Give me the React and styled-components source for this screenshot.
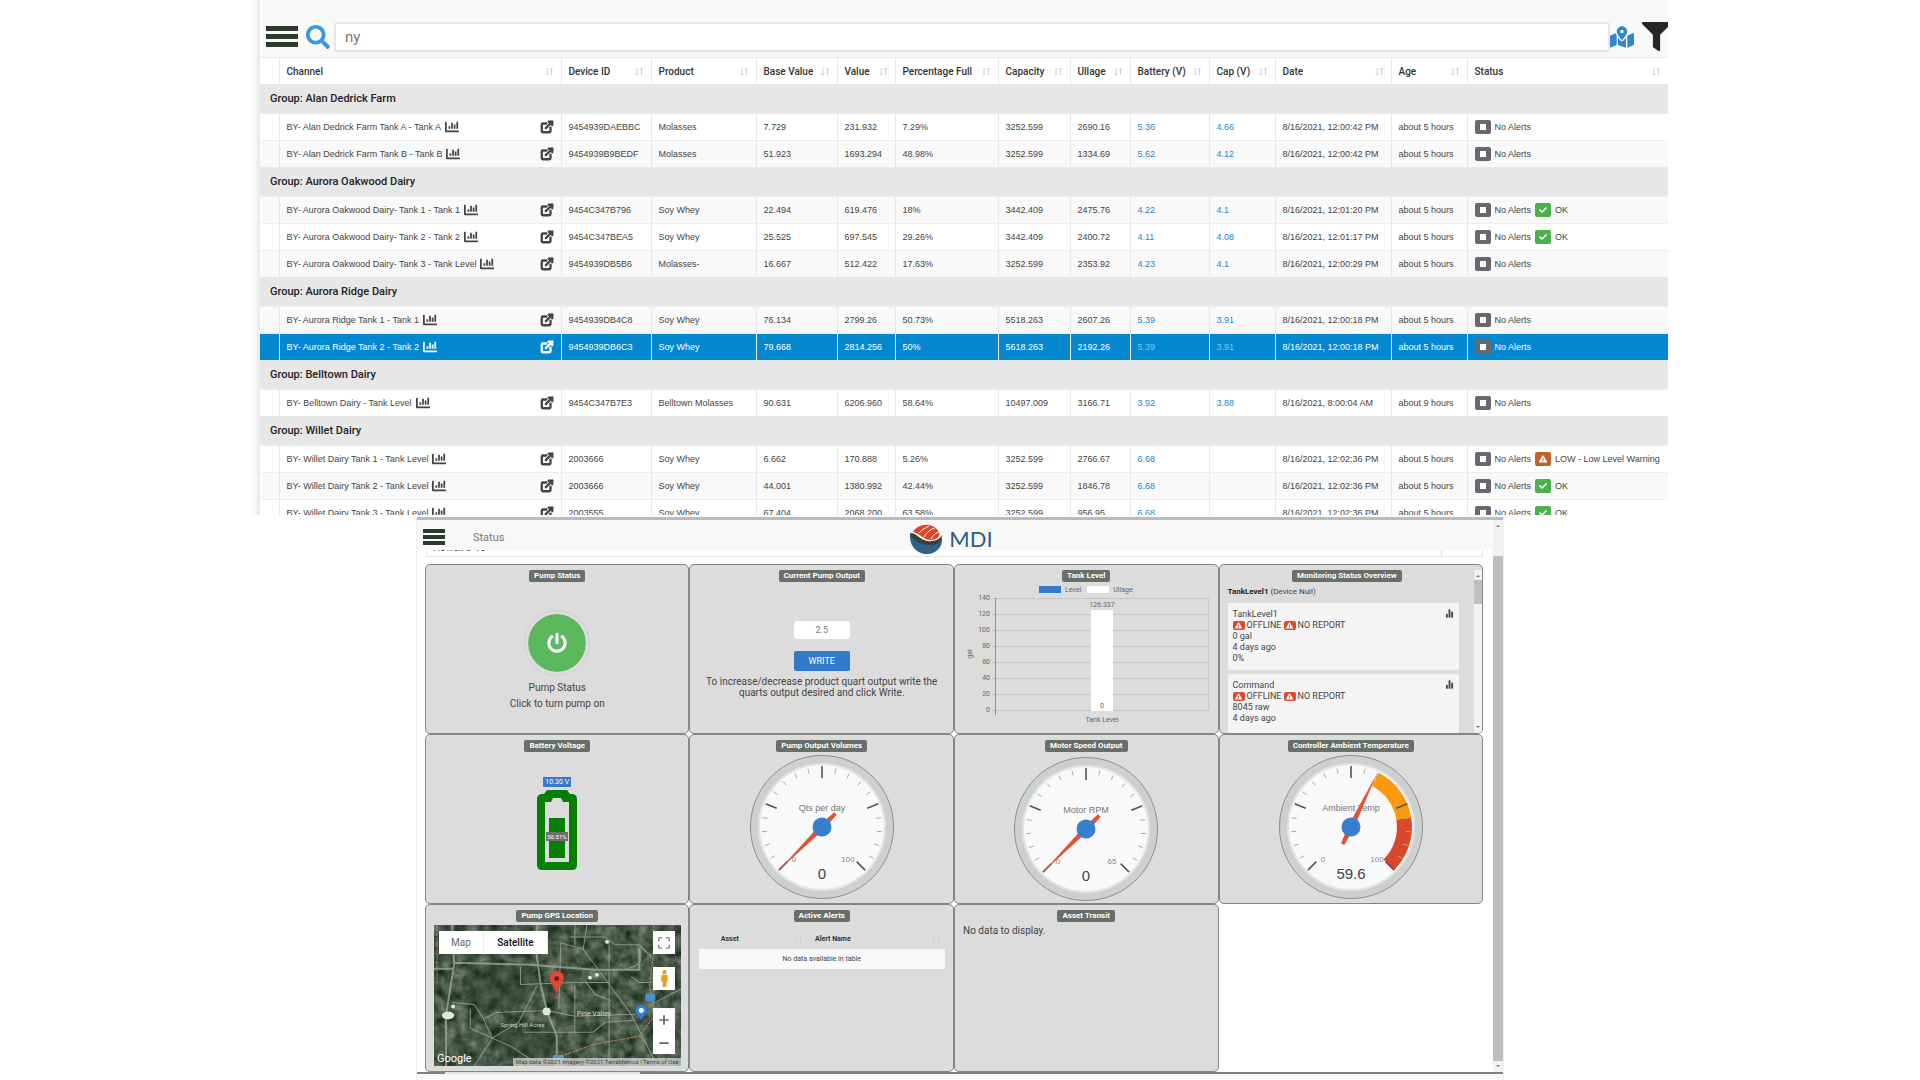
import styled, { createGlobalStyle, css } from 'styled-components'
import { FaFilter, FaSearch, FaMapMarkedAlt, FaPowerOff, FaChartBar, FaCheck, FaExclamationTriangle, FaMale } from 'react-icons/fa'
import { ExternalLink, ChartNoAxesColumn, Maximize, Plus, Minus } from 'lucide-react'

const GlobalStyle = createGlobalStyle`
    * { box-sizing: border-box; }
    body {
        margin: 0;
        background: #fff;
        color: #444;
        font-family: Roboto, "Liberation Sans", sans-serif;
    }
    button, input { font-family: inherit; }
    a { color: inherit; text-decoration: none; }
`

const Page = styled.main`
    min-height: 100vh;
    display: flex;
    flex-direction: column;
    align-items: center;
`

/* ---------- tank list ---------- */

const ListPanel = styled.section`
    width: 73.75%;
    max-height: 515px;
    overflow: hidden;
    padding-left: 5px;
    background: #f8f8f8;
`

const ListInner = styled.div`
    border-left: 3px solid #ececec;
`

const Toolbar = styled.div`
    display: flex;
    align-items: center;
    height: 58px;
    padding: 16px 0 0 6px;
    border-bottom: 1px solid #e8e8e8;
`

const IconButton = styled.button`
    display: flex;
    flex: none;
    padding: 0;
    border: 0;
    background: none;
    color: ${({$color}) => $color};
    margin-right: ${({$gap}) => $gap || 0}px;
`

const Bars = styled.span`
    display: flex;
    flex-direction: column;
    justify-content: space-between;
    width: ${({$w}) => $w}px;
    height: ${({$h}) => $h}px;

    i {
        height: ${({$bar}) => $bar}px;
        background: #2c382c;
    }
`

const SearchInput = styled.input`
    flex: 1;
    min-width: 0;
    height: 30px;
    padding: 0 9px;
    border: 2px solid #e6e6e6;
    border-radius: 3px;
    background: #fff;
    color: #777;
    font-size: 15px;
`

const FilterClip = styled.span`
    width: 26px;
    overflow: hidden;
    display: flex;

    svg { flex: none; }
`

const TankTable = styled.table`
    width: 100%;
    table-layout: fixed;
    border-collapse: collapse;
    font-family: "Liberation Sans", Arial, sans-serif;
    font-size: 9px;
    white-space: nowrap;
`

const cell = css`
    padding: 0 7px;
    overflow: hidden;
    text-align: left;
    border-left: 1px solid #e8e8e8;

    &:first-child { border-left: 0; }
`

const HeadCell = styled.th`
    ${cell}
    height: 26px;
    background: #fff;
    color: #333;
    font-family: Roboto, sans-serif;
    font-size: 10px;
    font-weight: 500;
`

const Between = styled.div`
    display: flex;
    align-items: center;
    justify-content: space-between;
`

const GroupCell = styled.td`
    height: 29px;
    padding: 0 10px;
    background: #e7e7e7;
    color: #222;
    font-family: Roboto, sans-serif;
    font-size: 11px;
    font-weight: 500;
`

const Row = styled.tr`
    background: ${({$selected, $shade}) => $selected ? '#0388d0' : $shade ? '#f9f9f9' : '#fff'};
    color: ${({$selected}) => $selected ? '#fff' : '#444'};
    border-top: 1px solid #eee;
`

const Cell = styled.td`
    ${cell}
    height: 27px;
`

const ValueLink = styled.a`
    color: ${({$selected}) => $selected ? '#7cc6f0' : '#1d86c8'};
`

const Label = styled.span`
    display: flex;
    align-items: center;
    gap: 4px;
`

const badgeColors = { none: '#6a6670', ok: '#4cb04f', low: '#c1622d', offline: '#dd4b2b' }

const StatusBadge = styled.span`
    display: inline-flex;
    align-items: center;
    justify-content: center;
    width: ${({$small}) => $small ? 12 : 16}px;
    height: ${({$small}) => $small ? 9 : 14}px;
    border-radius: 2px;
    background: ${({$kind}) => badgeColors[$kind]};
    color: #fff;

    b {
        width: 6px;
        height: 6px;
        background: #fff;
    }
`

function SortIcon(){
    return(
        <svg width="9" height="9" viewBox="0 0 9 9" fill="none" stroke="#cfcfcf">
            <path d="M2 1v7M.5 6.5 2 8l1.500-1.500M6.500 8V1M5 2.500 6.500 1 8 2.500" />
        </svg>
    )
}

const columns = [
    { name: '', width: 19 },
    { name: 'Channel' },
    { name: 'Device ID', width: 90 },
    { name: 'Product', width: 105 },
    { name: 'Base Value', width: 81 },
    { name: 'Value', width: 58 },
    { name: 'Percentage Full', width: 103 },
    { name: 'Capacity', width: 72 },
    { name: 'Ullage', width: 60 },
    { name: 'Battery (V)', width: 79 },
    { name: 'Cap (V)', width: 66 },
    { name: 'Date', width: 116 },
    { name: 'Age', width: 76 },
    { name: 'Status', width: 201 },
]

const groups = [
    { name: 'Alan Dedrick Farm', rows: [
        ['BY- Alan Dedrick Farm Tank A - Tank A', '9454939DAEBBC', 'Molasses', '7.729', '231.932', '7.29%', '3252.599', '2690.16', '5.36', '4.66', '8/16/2021, 12:00:42 PM', 'about 5 hours'],
        ['BY- Alan Dedrick Farm Tank B - Tank B', '9454939B9BEDF', 'Molasses', '51.923', '1693.294', '48.98%', '3252.599', '1334.69', '5.62', '4.12', '8/16/2021, 12:00:42 PM', 'about 5 hours', '', true],
    ]},
    { name: 'Aurora Oakwood Dairy', rows: [
        ['BY- Aurora Oakwood Dairy- Tank 1 - Tank 1', '9454C347B796', 'Soy Whey', '22.494', '619.476', '18%', '3442.409', '2475.76', '4.22', '4.1', '8/16/2021, 12:01:20 PM', 'about 5 hours', 'ok', true],
        ['BY- Aurora Oakwood Dairy- Tank 2 - Tank 2', '9454C347BEA5', 'Soy Whey', '25.525', '697.545', '29.26%', '3442.409', '2400.72', '4.11', '4.08', '8/16/2021, 12:01:17 PM', 'about 5 hours', 'ok'],
        ['BY- Aurora Oakwood Dairy- Tank 3 - Tank Level', '9454939DB5B6', 'Molasses-', '16.667', '512.422', '17.63%', '3252.599', '2353.92', '4.23', '4.1', '8/16/2021, 12:00:29 PM', 'about 5 hours', '', true],
    ]},
    { name: 'Aurora Ridge Dairy', rows: [
        ['BY- Aurora Ridge Tank 1 - Tank 1', '9454939DB4C8', 'Soy Whey', '76.134', '2799.26', '50.73%', '5518.263', '2607.26', '5.39', '3.91', '8/16/2021, 12:00:18 PM', 'about 5 hours', '', true],
        ['BY- Aurora Ridge Tank 2 - Tank 2', '9454939DB6C3', 'Soy Whey', '79.668', '2814.256', '50%', '5618.263', '2192.26', '5.39', '3.91', '8/16/2021, 12:00:18 PM', 'about 5 hours', '', false, true],
    ]},
    { name: 'Belltown Dairy', rows: [
        ['BY- Belltown Dairy - Tank Level', '9454C347B7E3', 'Belltown Molasses', '90.631', '6206.960', '58.64%', '10497.009', '3166.71', '3.92', '3.88', '8/16/2021, 8:00:04 AM', 'about 9 hours'],
    ]},
    { name: 'Willet Dairy', rows: [
        ['BY- Willet Dairy Tank 1 - Tank Level', '2003666', 'Soy Whey', '6.662', '170.888', '5.26%', '3252.599', '2766.67', '6.68', '', '8/16/2021, 12:02:36 PM', 'about 5 hours', 'low'],
        ['BY- Willet Dairy Tank 2 - Tank Level', '2003666', 'Soy Whey', '44.001', '1380.992', '42.44%', '3252.599', '1846.78', '6.68', '', '8/16/2021, 12:02:36 PM', 'about 5 hours', 'ok', true],
        ['BY- Willet Dairy Tank 3 - Tank Level', '2003555', 'Soy Whey', '67.404', '2068.200', '63.58%', '3252.599', '956.95', '6.68', '', '8/16/2021, 12:02:36 PM', 'about 5 hours', 'ok'],
    ]},
]

function TankRow({data}){
    const [channel, ...rest] = data
    const values = rest.slice(0, 11)
    const status = data[12]
    const selected = data[14]
    return(
        <Row $shade={data[13]} $selected={selected}>
            <Cell />
            <Cell>
                <Between>
                    <Label>{channel}<FaChartBar size={14} /></Label>
                    <ExternalLink size={14} strokeWidth={4} />
                </Between>
            </Cell>
            {values.map((value, i) => (
                <Cell key={i}>
                    {i === 7 || i === 8 ? <ValueLink href="#" $selected={selected}>{value}</ValueLink> : value}
                </Cell>
            ))}
            <Cell>
                <Label>
                    <StatusBadge $kind="none"><b /></StatusBadge>No Alerts
                    {status === 'ok' && <><StatusBadge $kind="ok"><FaCheck size={8} /></StatusBadge>OK</>}
                    {status === 'low' && <><StatusBadge $kind="low"><FaExclamationTriangle size={8} /></StatusBadge>LOW - Low Level Warning</>}
                </Label>
            </Cell>
        </Row>
    )
}

function TankList(){
    return(
        <ListPanel>
            <ListInner>
                <Toolbar>
                    <IconButton aria-label="Menu" $gap={8}><Bars $w={32} $h={21} $bar={5}><i /><i /><i /></Bars></IconButton>
                    <IconButton aria-label="Search" $color="#3a9ad9" $gap={4}><FaSearch size={24} /></IconButton>
                    <SearchInput aria-label="Search channels" defaultValue="ny" />
                    <IconButton aria-label="Map view" $color="#2f87d0" $gap={8}><FaMapMarkedAlt size={24} /></IconButton>
                    <IconButton aria-label="Filter" $color="#262626"><FilterClip><FaFilter size={29} /></FilterClip></IconButton>
                </Toolbar>
                <TankTable>
                    <colgroup>
                        {columns.map((c, i) => <col key={i} style={{ width: c.width }} />)}
                    </colgroup>
                    <thead>
                        <tr>
                            {columns.map((c, i) => (
                                <HeadCell key={i}>{c.name && <Between>{c.name}<SortIcon /></Between>}</HeadCell>
                            ))}
                        </tr>
                    </thead>
                    {groups.map(g => (
                        <tbody key={g.name}>
                            <tr><GroupCell colSpan={14}>Group: {g.name}</GroupCell></tr>
                            {g.rows.map((r, i) => <TankRow key={i} data={r} />)}
                        </tbody>
                    ))}
                </TankTable>
            </ListInner>
        </ListPanel>
    )
}

/* ---------- pump dashboard ---------- */

const DashPanel = styled.section`
    width: 56.67%;
    flex: 1;
    display: flex;
    flex-direction: column;
    margin-top: 2px;
    border: solid #eee;
    border-width: 0 1px;
`

const DashBody = styled.div`
    display: flex;
    border-top: 3px solid #b9bcbc;
`

const DashMain = styled.div`
    flex: 1;
    min-width: 0;
`

const DashHeader = styled.header`
    display: grid;
    grid-template-columns: 1fr auto 1fr;
    align-items: center;
    height: 30px;
    padding: 0 14px 0 6px;
    background: #f8f8f8;
    color: #777;
    font-size: 11px;
`

const HeaderLeft = styled.div`
    display: flex;
    align-items: center;
    gap: 28px;
`

const Logo = styled.div`
    display: flex;
    align-items: center;
    gap: 6px;
    padding-top: 4px;
    color: #2d5d84;
    font-family: Lato, sans-serif;
    font-size: 22px;
    line-height: 30px;
`

const SelectorStrip = styled.div`
    display: flex;
    height: 7px;
    margin: 0 10px 7px 9px;
    border: solid #e4e4e4;
    border-width: 0 1px 1px;
    overflow: hidden;
`

const SelectorText = styled.span`
    flex: 1;
    display: flex;
    align-items: flex-end;
    padding: 0 6px 3px;
    border-right: 1px solid #ddd;
    margin-right: 40px;
    font-size: 10px;
    line-height: 10px;
`

const Grid = styled.div`
    display: grid;
    grid-template-columns: repeat(4, 1fr);
    grid-template-rows: 170px 170px 168px;
    margin: 0 10px 0 8px;
`

const Card = styled.article`
    display: flex;
    flex-direction: column;
    align-items: center;
    min-width: 0;
    min-height: 0;
    overflow: hidden;
    padding-top: 5px;
    border: 1px solid #858585;
    border-radius: 5px;
    background: #dcdcdc;
    color: #444;
    font-size: 10px;
`

const CardTitle = styled.h2`
    flex: none;
    margin: 0;
    padding: 0 5px;
    border-radius: 2px;
    background: #686e68;
    color: #fff;
    font-size: 8px;
    font-weight: 700;
    line-height: 12px;
`

const Centered = styled.div`
    flex: 1;
    width: 100%;
    display: flex;
    flex-direction: column;
    align-items: center;
    padding-top: ${({$top}) => $top}px;
    text-align: center;
`

const PowerButton = styled.button`
    display: flex;
    align-items: center;
    justify-content: center;
    width: 66px;
    height: 66px;
    margin-bottom: 4px;
    padding: 0;
    border: 4px solid #dcdcdc;
    border-radius: 50%;
    outline: 1px solid #cfcfcf;
    outline-offset: -1px;
    background: #5cb85c;
    background-clip: padding-box;
    color: #fff;
`

const StatusLine = styled.span`
    line-height: 16px;
`

const AmountInput = styled.input`
    width: 56px;
    height: 18px;
    padding: 0;
    border: 0;
    border-radius: 3px;
    color: #777;
    font-size: 9px;
    text-align: center;
`

const WriteButton = styled.button`
    width: 56px;
    height: 20px;
    margin: 12px 0 5px;
    padding: 0;
    border: 0;
    border-radius: 2px;
    background: #337acb;
    color: #fff;
    font-size: 9px;
`

const Hint = styled.p`
    margin: 0;
    padding: 0 12px;
    line-height: 11px;
`

const CardScroll = styled.div`
    flex: 1;
    align-self: stretch;
    display: flex;
    min-height: 0;
`

const Overview = styled.div`
    flex: 1;
    display: flex;
    flex-direction: column;
    align-items: center;
    min-width: 0;
    overflow: hidden;
`

const DeviceName = styled.div`
    align-self: stretch;
    padding: 4px 8px 5px;
    font-size: 8px;
    line-height: 12px;

    b { color: #222; }
`

const DeviceBox = styled.div`
    display: flex;
    flex: none;
    justify-content: space-between;
    align-items: flex-start;
    align-self: stretch;
    height: 67px;
    margin: 0 15px 4px 8px;
    padding: 6px 5px;
    background: #f4f4f4;
    font-size: 9px;
    line-height: 11px;
    white-space: nowrap;
`

const Alerts = styled.div`
    display: flex;
    align-items: center;
    gap: 2px;
`

const Scrollbar = styled.div`
    display: flex;
    flex-direction: column;
    justify-content: space-between;
    align-items: center;
    width: ${({$w}) => $w}px;
    padding: 3px 0;
    background: #f2f2f2;
`

const Arrow = styled.i`
    border: 2px solid transparent;
    border-${({$down}) => $down ? 'top' : 'bottom'}-color: #777;
`

const Thumb = styled.i`
    width: 100%;
    flex: ${({$grow}) => $grow ? 1 : '0 0 24px'};
    margin: ${({$m}) => $m};
    background: #bdc0c0;
`

const VoltLabel = styled.span`
    margin-bottom: 3px;
    padding: 0 2px;
    background: #337acb;
    color: #fff;
    font-size: 7px;
    line-height: 10px;
`

const MapBox = styled.div`
    position: relative;
    align-self: stretch;
    flex: 1;
    margin: 3px 7px 5px 8px;
    overflow: hidden;
    background: #46584a;

    > svg { display: block; width: 100%; height: 100%; }
`

const MapTypes = styled.div`
    position: absolute;
    top: 6px;
    left: 5px;
    display: flex;
`

const MapType = styled.button`
    width: ${({$active}) => $active ? 64 : 45}px;
    height: 23px;
    padding: 0;
    border: 0;
    border-right: 1px solid #eee;
    background: #fff;
    color: ${({$active}) => $active ? '#111' : '#666'};
    font-size: 10px;
    font-weight: ${({$active}) => $active ? 500 : 400};
`

const MapControls = styled.div`
    position: absolute;
    top: 6px;
    right: 6px;
    display: flex;
    flex-direction: column;
    gap: ${({$gap}) => $gap}px;
`

const MapButton = styled.button`
    display: flex;
    align-items: center;
    justify-content: center;
    width: 22px;
    height: 23px;
    padding: 0;
    border: 0;
    background: #fff;
    color: ${({$color}) => $color || '#666'};
`

const ZoomPair = styled.div`
    margin-top: 5px;
`

const GoogleMark = styled.span`
    position: absolute;
    left: 3px;
    bottom: 0;
    color: #fff;
    font-size: 11px;
    line-height: 14px;
`

const MapCredit = styled.span`
    position: absolute;
    right: 0;
    bottom: 0;
    padding: 0 3px;
    background: rgba(225, 225, 225, .7);
    font-size: 6px;
    line-height: 8px;
    white-space: nowrap;
`

const AlertTable = styled.table`
    width: 246px;
    max-width: 94%;
    margin-top: 7px;
    border-collapse: collapse;
    table-layout: fixed;
    font-size: 7px;

    th {
        height: 20px;
        padding: 0 4px 0 22px;
        text-align: left;
        color: #333;
    }
    th:first-child { width: 44%; }
    th + th { padding-left: 8px; }
    td {
        height: 20px;
        background: #f9f9f9;
        text-align: center;
    }
`

const Empty = styled.p`
    align-self: flex-start;
    margin: 0;
    padding: 2px 8px;
    line-height: 14px;
`

const BottomBar = styled.div`
    height: 2px;
    padding-left: 28px;
    background: #7c827e;

    i {
        display: block;
        width: 195px;
        height: 2px;
        background: #e2e2e6;
    }
`

const BottomStrip = styled.div`
    flex: 1;
    background: #f8f8f8;
`

function polar(angle, r){
    const a = angle * Math.PI / 180
    return [75 + r * Math.sin(a), 75 - r * Math.cos(a)]
}

function arc(from, to, inner, outer){
    const a = polar(from, outer), b = polar(to, outer)
    const c = polar(to, inner), d = polar(from, inner)
    return `M${a}A${outer} ${outer} 0 0 1 ${b}L${c}A${inner} ${inner} 0 0 0 ${d}Z`
}

function Gauge({title, value, max, zones}){
    const angle = -135 + value / max * 270
    const ticks = Array.from({ length: 21 }, (_, i) => i)
    return(
        <svg width="150" height="150" viewBox="0 0 150 150" fontFamily="Liberation Sans, sans-serif" textAnchor="middle">
            <circle cx="75" cy="75" r="71.500" fill="#cdd0d0" stroke="#8d9090" />
            <circle cx="75" cy="75" r="64" fill="#e2e4e4" />
            <circle cx="75" cy="75" r="62" fill="#f9f9f9" />
            {zones && <>
                <path d={arc(27, 81, 46, 61)} fill="#fb9a0c" />
                <path d={arc(81, 135, 46, 61)} fill="#d9482a" />
            </>}
            {ticks.map(i => {
                const major = i % 5 === 0
                const [x1, y1] = polar(-135 + i * 13.5, major ? 49 : 55)
                const [x2, y2] = polar(-135 + i * 13.5, major ? 61 : 60)
                return <line key={i} x1={x1} y1={y1} x2={x2} y2={y2} stroke={major ? '#555' : '#aaa'} strokeWidth={major ? 1.6 : 1} />
            })}
            <text x="75" y="59" fontSize="9" fill="#777">{title}</text>
            <text x="47" y="110" fontSize="8" fill="#888">0</text>
            <text x="101" y="110" fontSize="8" fill="#888">{max}</text>
            <text x="75" y="127" fontSize="15" fill="#444">{value}</text>
            <path d="M75 14 78 75 76.800 94H73.200L72 75Z" fill="#de5335" transform={`rotate(${angle} 75 75)`} />
            <circle cx="75" cy="75" r="9.500" fill="#357fcc" />
        </svg>
    )
}

function TankChart(){
    const lines = [140, 120, 100, 80, 60, 40, 20, 0]
    return(
        <svg width="262" height="146" viewBox="0 0 262 146" fontFamily="Roboto, sans-serif" fontSize="7" fill="#666" textAnchor="middle">
            <rect x="84" y="4" width="22" height="7" fill="#337acb" />
            <text x="118" y="10">Level</text>
            <rect x="132" y="4" width="22" height="7" fill="#fff" />
            <text x="168" y="10">Ullage</text>
            {lines.map((n, i) => (
                <g key={n}>
                    <line x1="37" x2="253" y1={16.500 + i * 16} y2={16.500 + i * 16} stroke="#c6c6c6" />
                    <text x="35" y={18 + i * 16} textAnchor="end">{n}</text>
                </g>
            ))}
            <path d="M40.500 16V133" stroke="#8f9496" />
            <path d="M253.500 16V128" stroke="#c9c9c9" />
            <rect x="136" y="28" width="22" height="101" fill="#fff" />
            <text x="147" y="25">126.337</text>
            <text x="147" y="126">0</text>
            <text x="147" y="140">Tank Level</text>
            <text transform="translate(17 72) rotate(-90)">gal</text>
        </svg>
    )
}

function Battery(){
    return(
        <svg width="40" height="80" viewBox="0 0 40 80">
            <path fill="#058005" fillRule="evenodd" d="M10 0H30L33 4H36Q40 5 40 9V75Q40 80 35 80H5Q0 80 0 75V9Q0 5 4 4H7ZM8 12V72H32V12H26L24 8H16L14 12Z" />
            <path fill="#058005" d="M12 28H28V68H12Z" />
            <rect x="9" y="42" width="22" height="9" fill="#6f6f6f" />
            <text x="20" y="49" fill="#fff" fontSize="6" fontFamily="Roboto, sans-serif" textAnchor="middle">56.51%</text>
        </svg>
    )
}

function Satellite(){
    return(
        <svg viewBox="0 0 246 142" preserveAspectRatio="none" fill="none">
            <filter id="terrain" x="0" y="0" width="1" height="1" colorInterpolationFilters="sRGB">
                <feTurbulence type="fractalNoise" baseFrequency=".09" numOctaves="5" seed="4" />
                <feColorMatrix values=".55 0 0 0 0  .5 0 0 0 .09  .5 0 0 0 .02  0 0 0 0 1" />
            </filter>
            <rect width="246" height="142" filter="url(#terrain)" />
            <path fill="#1e3a26" opacity=".35" d="M32 40 60 34 100 40 96 66 84 88 66 84 50 94 36 84 28 62ZM56 104 84 94 118 100 122 130 96 140 66 136Z" />
            <g stroke="#a3ada5" strokeWidth="1" opacity=".75">
                <path d="M18 0 20 40 12 90V142M0 44H20M20 38 96 40 160 45H204V24M102 0V30L106 60 112 86 122 112V142" strokeWidth="2" />
                <path d="M124 84 126 18 148 24 196 90 222 142M148 26 152 0M86 42V60L140 58H174V142M140 60V108" />
                <path d="M18 78 40 80 48 92 58 114 76 122 100 138M40 142 58 114 84 98 102 62M36 84V104L58 114" />
                <path d="M50 94 62 88 112 86 140 92 200 90M122 108H158L170 98 200 96M90 108H130M140 0V20M196 52 204 58 216 58" />
                <path d="M136 12 170 12 180 20 204 20 216 32M174 16V58M216 80 246 64M204 24C208 34 206 42 190 44M150 56 160 70 176 76" />
            </g>
            <path d="M3 0V60M218 0V30L214 60 220 90 204 112 160 120 120 134M204 112 212 120" stroke="#b9805f" strokeDasharray="3 1" />
            <g fill="#dfe5e0">
                <circle cx="112" cy="87" r="4" /><ellipse cx="14" cy="91" rx="6" ry="4" />
                <circle cx="172" cy="17" r="2" /><circle cx="162" cy="50" r="2" /><circle cx="155" cy="53" r="2" /><circle cx="19" cy="82" r="2" />
            </g>
            <g fill="#c9d2cb" fontFamily="Roboto, sans-serif" fontSize="7">
                <text x="142" y="92">Pine Valley</text>
                <text x="66" y="103" fontSize="6">Spring Hill Acres</text>
            </g>
            <rect x="210" y="69" width="10" height="8" rx="2" fill="#4c8fca" />
            <rect x="118" y="131" width="11" height="6" rx="2" fill="#5a94c2" />
            <path fill="#2f7fd0" d="M206 96C203 91 200 90 200 86A6 6 0 0 1 212 86C212 90 208 91 206 96Z" />
            <circle cx="206" cy="86" r="2.500" fill="#fff" />
            <path fill="#e04a2f" d="M122 70C121 62 115 60 115 53A7 7 0 0 1 129 53C129 60 123 62 122 70Z" />
            <circle cx="122" cy="54" r="2.500" fill="#7a1c12" />
        </svg>
    )
}

function LogoMark(){
    return(
        <svg width="34" height="30" viewBox="0 0 34 30">
            <path fill="#2f6288" d="M1 10C7 10 10 17 17 18 24 20 30 17 33 14 34 24 26 30 18 30 8 30 0 22 1 10Z" />
            <path fill="#33433c" d="M1 9C8 9 11 16 18 17 25 18 31 15 33 11 33 17 29 22 21 21 12 21 4 18 1 9Z" />
            <path fill="#dd4628" d="M4 8C8 0 24-3 30 8 32 12 28 16 22 16 14 16 11 9 4 8Z" />
            <path d="M10 9C13 6 16 4 20 2M15 13C18 8 22 5 26 4M22 15C24 11 27 9 30 8" stroke="#fff" fill="none" />
        </svg>
    )
}

function Device({name, reading, percent}){
    return(
        <DeviceBox>
            <div>
                <div>{name}</div>
                <Alerts>
                    <StatusBadge $kind="offline" $small><FaExclamationTriangle size={7} /></StatusBadge>OFFLINE
                    <StatusBadge $kind="offline" $small><FaExclamationTriangle size={7} /></StatusBadge>NO REPORT
                </Alerts>
                <div>{reading}</div>
                <div>4 days ago</div>
                <div>{percent}</div>
            </div>
            <ChartNoAxesColumn size={9} strokeWidth={5} />
        </DeviceBox>
    )
}

function Dashboard(){
    return(
        <DashPanel>
            <DashBody>
                <DashMain>
                    <DashHeader>
                        <HeaderLeft>
                            <IconButton aria-label="Menu"><Bars $w={22} $h={16} $bar={4}><i /><i /><i /></Bars></IconButton>
                            Status
                        </HeaderLeft>
                        <Logo><LogoMark />MDI</Logo>
                    </DashHeader>
                    <SelectorStrip><SelectorText>Howell 3-15</SelectorText></SelectorStrip>
                    <Grid>
                        <Card>
                            <CardTitle>Pump Status</CardTitle>
                            <Centered $top={28}>
                                <PowerButton aria-label="Turn pump on"><FaPowerOff size={20} /></PowerButton>
                                <StatusLine>Pump Status</StatusLine>
                                <StatusLine>Click to turn pump on</StatusLine>
                            </Centered>
                        </Card>
                        <Card>
                            <CardTitle>Current Pump Output</CardTitle>
                            <Centered $top={39}>
                                <AmountInput aria-label="Quart output" defaultValue="2.5" />
                                <WriteButton>WRITE</WriteButton>
                                <Hint>To increase/decrease product quart output write the quarts output desired and click Write.</Hint>
                            </Centered>
                        </Card>
                        <Card>
                            <CardTitle>Tank Level</CardTitle>
                            <TankChart />
                        </Card>
                        <Card>
                            <CardScroll>
                                <Overview>
                                    <CardTitle>Monitoring Status Overview</CardTitle>
                                    <DeviceName><b>TankLevel1</b> (Device Null)</DeviceName>
                                    <Device name="TankLevel1" reading="0 gal" percent="0%" />
                                    <Device name="Command" reading="8045 raw" />
                                </Overview>
                                <Scrollbar $w={8}><Arrow /><Thumb $m="3px 0 auto" /><Arrow $down /></Scrollbar>
                            </CardScroll>
                        </Card>
                        <Card>
                            <CardTitle>Battery Voltage</CardTitle>
                            <Centered $top={25}>
                                <VoltLabel>10.30 V</VoltLabel>
                                <Battery />
                            </Centered>
                        </Card>
                        <Card>
                            <CardTitle>Pump Output Volumes</CardTitle>
                            <Gauge title="Qts per day" value={0} max={100} />
                        </Card>
                        <Card>
                            <CardTitle>Motor Speed Output</CardTitle>
                            <Centered $top={2}>
                                <Gauge title="Motor RPM" value={0} max={65} />
                            </Centered>
                        </Card>
                        <Card>
                            <CardTitle>Controller Ambient Temperature</CardTitle>
                            <Gauge title="Ambient Temp" value={59.6} max={100} zones />
                        </Card>
                        <Card>
                            <CardTitle>Pump GPS Location</CardTitle>
                            <MapBox>
                                <Satellite />
                                <MapTypes>
                                    <MapType>Map</MapType>
                                    <MapType $active>Satellite</MapType>
                                </MapTypes>
                                <MapControls $gap={13}>
                                    <MapButton aria-label="Full screen"><Maximize size={14} /></MapButton>
                                    <MapButton aria-label="Street view" $color="#f29a1a"><FaMale size={17} /></MapButton>
                                    <ZoomPair>
                                        <MapButton aria-label="Zoom in"><Plus size={14} strokeWidth={3} /></MapButton>
                                        <MapButton aria-label="Zoom out"><Minus size={14} strokeWidth={3} /></MapButton>
                                    </ZoomPair>
                                </MapControls>
                                <GoogleMark>Google</GoogleMark>
                                <MapCredit>Map data ©2021 Imagery ©2021 TerraMetrics | Terms of Use</MapCredit>
                            </MapBox>
                        </Card>
                        <Card>
                            <CardTitle>Active Alerts</CardTitle>
                            <AlertTable>
                                <thead>
                                    <tr>
                                        <th><Between>Asset<SortIcon /></Between></th>
                                        <th><Between>Alert Name<SortIcon /></Between></th>
                                    </tr>
                                </thead>
                                <tbody>
                                    <tr><td colSpan={2}>No data available in table</td></tr>
                                </tbody>
                            </AlertTable>
                        </Card>
                        <Card>
                            <CardTitle>Asset Transit</CardTitle>
                            <Empty>No data to display.</Empty>
                        </Card>
                    </Grid>
                </DashMain>
                <Scrollbar $w={10}><Arrow /><Thumb $grow $m="29px 0 4px" /><Arrow $down /></Scrollbar>
            </DashBody>
            <BottomBar><i /></BottomBar>
            <BottomStrip />
        </DashPanel>
    )
}

export default function App(){
    return(
        <Page>
            <GlobalStyle />
            <TankList />
            <Dashboard />
        </Page>
    )
}
